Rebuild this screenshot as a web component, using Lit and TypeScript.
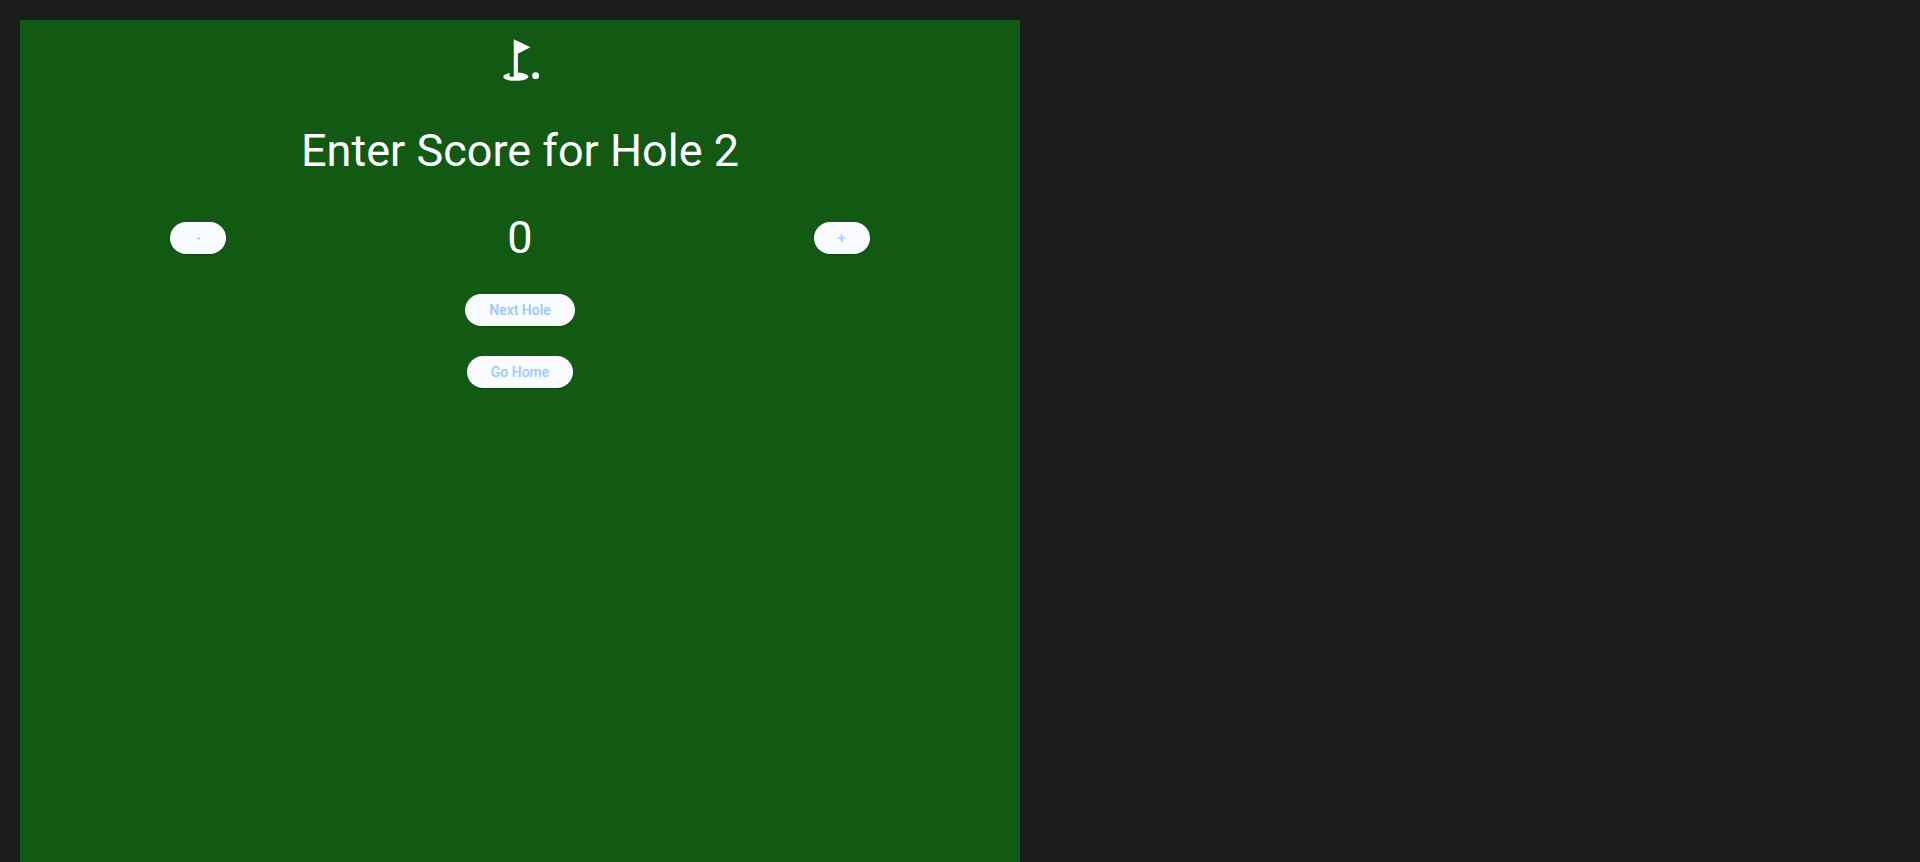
import { LitElement, html, css } from "lit";
import { customElement, state } from "lit/decorators.js";

@customElement("app-root")
export class AppRoot extends LitElement {
  static styles = css`
    :host {
      display: flex;
      box-sizing: border-box;
      min-height: 100vh;
      padding: 20px 20px 0;
      background: #1a1c1e;
      color: #ffffff;
      font-family: Roboto, sans-serif;
    }
    .card {
      flex: 0 1 1000px;
      box-sizing: border-box;
      display: flex;
      flex-direction: column;
      align-items: center;
      padding: 15px 10px;
      background: #125914;
    }
    .flag {
      width: 50px;
      height: 50px;
      fill: currentColor;
    }
    .title,
    .score {
      margin: 0;
      font-size: 45px;
      line-height: 52px;
      font-weight: 400;
    }
    .title {
      margin-top: 40px;
      text-align: center;
    }
    .counter {
      align-self: stretch;
      display: flex;
      align-items: center;
      justify-content: space-around;
      margin-top: 35px;
    }
    .actions {
      display: flex;
      flex-direction: column;
      align-items: center;
      gap: 30px;
      margin-top: 30px;
    }
    .pill {
      min-width: 56px;
      height: 32px;
      padding: 0 24px;
      border: none;
      border-radius: 16px;
      background: #fafbff;
      color: #99c8ff;
      font: 500 14px/20px Roboto, sans-serif;
      box-shadow: 0 1px 1px rgba(0, 0, 0, 0.2);
      cursor: pointer;
    }
  `;

  @state() private hole = 2;
  @state() private score = 0;

  private nextHole() {
    this.hole += 1;
    this.score = 0;
  }

  private goHome() {
    this.hole = 1;
    this.score = 0;
  }

  render() {
    return html`
      <main class="card">
        <svg class="flag" viewBox="0 0 24 24" aria-hidden="true">
          <circle cx="19.5" cy="19.5" r="1.65" />
          <path
            d="M17 5.92L9 2v18H7v-1.73c-1.79.35-3 .99-3 1.73 0 1.1 2.69 2 6 2s6-.9 6-2c0-.99-2.16-1.81-5-1.97V8.98l6-3.06z"
          />
        </svg>
        <h1 class="title">Enter Score for Hole ${this.hole}</h1>
        <div class="counter">
          <button class="pill" @click=${() => (this.score = Math.max(0, this.score - 1))}>-</button>
          <output class="score">${this.score}</output>
          <button class="pill" @click=${() => (this.score += 1)}>+</button>
        </div>
        <div class="actions">
          <button class="pill" @click=${this.nextHole}>Next Hole</button>
          <button class="pill" @click=${this.goHome}>Go Home</button>
        </div>
      </main>
    `;
  }
}
